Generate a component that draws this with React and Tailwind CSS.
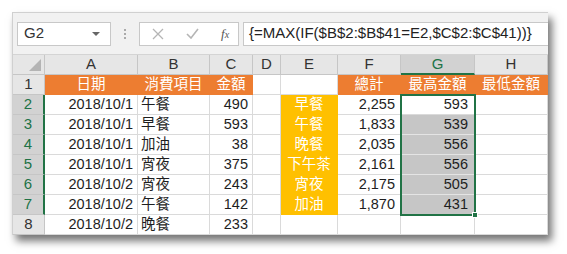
import React from 'react';

const cols = ['A', 'B', 'C', 'D', 'E', 'F', 'G', 'H'];

const rows = [
  ['2018/10/1', '午餐', '490', '早餐', '2,255', '593'],
  ['2018/10/1', '早餐', '593', '午餐', '1,833', '539'],
  ['2018/10/1', '加油', '38', '晚餐', '2,035', '556'],
  ['2018/10/1', '宵夜', '375', '下午茶', '2,161', '556'],
  ['2018/10/2', '宵夜', '243', '宵夜', '2,175', '505'],
  ['2018/10/2', '午餐', '142', '加油', '1,870', '431'],
  ['2018/10/2', '晚餐', '233', '', '', ''],
];

const font = "font-['Liberation_Sans','Noto_Sans_CJK_TC',sans-serif]";
const cell = 'h-5 border-r border-b border-[#dadada] flex items-center text-[14.5px] leading-none text-[#1e1e1e] overflow-hidden whitespace-nowrap';

function FormulaBar() {
  return (
    <div className="h-[42px] bg-[#f1f1f1] border-b border-[#d4d4d4] flex items-center pl-1 gap-1">
      <div className="w-[94px] h-6 bg-white border border-[#c8c8c8] flex items-center justify-between px-[6px]">
        <span className="text-[15px] text-[#333]">G2</span>
        <span className="w-0 h-0 border-l-[4px] border-r-[4px] border-t-[4px] border-l-transparent border-r-transparent border-t-[#666] mr-1" />
      </div>
      <div className="w-5 flex flex-col items-center gap-[2px]">
        <span className="w-[2px] h-[2px] bg-[#aaa]" />
        <span className="w-[2px] h-[2px] bg-[#aaa]" />
        <span className="w-[2px] h-[2px] bg-[#aaa]" />
      </div>
      <div className="w-[100px] h-6 bg-white border border-[#c8c8c8] flex items-center pl-[12px] gap-[22px]">
        <svg width="12" height="12" viewBox="0 0 12 12">
          <path d="M1 1L11 11M11 1L1 11" stroke="#b5b5b5" strokeWidth="1.3" />
        </svg>
        <svg width="13" height="11" viewBox="0 0 13 11">
          <path d="M1 6L5 10L12 1" stroke="#b5b5b5" strokeWidth="1.6" fill="none" />
        </svg>
        <span className="font-['Liberation_Serif',serif] italic text-[13px] text-[#555]">
          f<span className="text-[10px]">x</span>
        </span>
      </div>
      <div className="flex-1 h-6 bg-white border border-[#c8c8c8] border-r-0 flex items-center pl-[5px]">
        <span className="text-[15px] text-[#222]">{'{=MAX(IF($B$2:$B$41=E2,$C$2:$C$41))}'}</span>
      </div>
    </div>
  );
}

export default function App() {
  return (
    <div className={`bg-white w-[567px] h-[254px] pl-3 pt-3 ${font}`}>
      <div className="w-[536px] h-[223px] bg-white shadow-[4px_6px_8px_rgba(0,0,0,0.55)] overflow-hidden border-l border-t border-[#d0d0d0]">
        <FormulaBar />
        <div className="relative grid grid-cols-[32px_93px_72px_43px_28px_57px_63px_74px_73px]">
          {/* column headers */}
          <div className="h-5 bg-[#e6e6e6] border-r border-b border-[#c6c6c6] flex items-end justify-end p-[3px]">
            <svg width="12" height="12" viewBox="0 0 12 12">
              <path d="M12 0L12 12L0 12Z" fill="#b4b4b4" />
            </svg>
          </div>
          {cols.map((c) =>
            c === 'G' ? (
              <div key={c} className="h-5 bg-[#d2d2d2] border-r border-[#c6c6c6] border-b-2 border-b-[#217346] flex items-center justify-center text-[15px] text-[#217346]">
                {c}
              </div>
            ) : (
              <div key={c} className="h-5 bg-[#e6e6e6] border-r border-b border-[#c6c6c6] flex items-center justify-center text-[15px] text-[#333]">
                {c}
              </div>
            )
          )}

          {/* row 1 */}
          <div className="h-5 bg-[#e6e6e6] border-r border-b border-[#c6c6c6] flex items-center justify-center text-[15px] text-[#333]">1</div>
          <div className={`${cell} bg-[#ed7d31] border-[#ed7d31] text-white justify-center`}>日期</div>
          <div className={`${cell} bg-[#ed7d31] border-[#ed7d31] text-white justify-center`}>消費項目</div>
          <div className={`${cell} bg-[#ed7d31] border-[#ed7d31] text-white justify-center`}>金額</div>
          <div className={cell} />
          <div className={cell} />
          <div className={`${cell} bg-[#ed7d31] border-[#ed7d31] text-white justify-center`}>總計</div>
          <div className={`${cell} bg-[#ed7d31] border-[#ed7d31] text-white justify-center`}>最高金額</div>
          <div className={`${cell} bg-[#ed7d31] border-[#ed7d31] text-white justify-center`}>最低金額</div>

          {rows.map((r, i) => {
            const n = i + 2;
            const sel = n <= 7;
            return (
              <React.Fragment key={n}>
                {sel ? (
                  <div className="h-5 bg-[#d2d2d2] border-b border-[#c6c6c6] border-r-2 border-r-[#217346] flex items-center justify-center text-[15px] text-[#217346]">{n}</div>
                ) : (
                  <div className="h-5 bg-[#e6e6e6] border-r border-b border-[#c6c6c6] flex items-center justify-center text-[15px] text-[#333]">{n}</div>
                )}
                <div className={`${cell} justify-end pr-[4px]`}>{r[0]}</div>
                <div className={`${cell} pl-[3px]`}>{r[1]}</div>
                <div className={`${cell} justify-end pr-[4px]`}>{r[2]}</div>
                <div className={cell} />
                {r[3] ? (
                  <div className={`${cell} bg-[#ffc000] border-[#ffc000] text-white justify-center`}>{r[3]}</div>
                ) : (
                  <div className={cell} />
                )}
                <div className={`${cell} justify-end pr-[5px]`}>{r[4]}</div>
                {sel && n > 2 ? (
                  <div className={`${cell} bg-[#c6c6c6] border-b-[#e4e4e4] justify-end pr-[6px]`}>{r[5]}</div>
                ) : (
                  <div className={`${cell} justify-end pr-[6px]`}>{r[5]}</div>
                )}
                <div className={cell} />
              </React.Fragment>
            );
          })}

          {/* selection outline G2:G7 */}
          <div className="absolute left-[387px] top-[39px] w-[76px] h-[122px] border-2 border-[#217346] pointer-events-none">
            <span className="absolute -right-[4px] -bottom-[4px] w-[6px] h-[6px] bg-[#217346] border border-white" />
          </div>
        </div>
      </div>
    </div>
  );
}
